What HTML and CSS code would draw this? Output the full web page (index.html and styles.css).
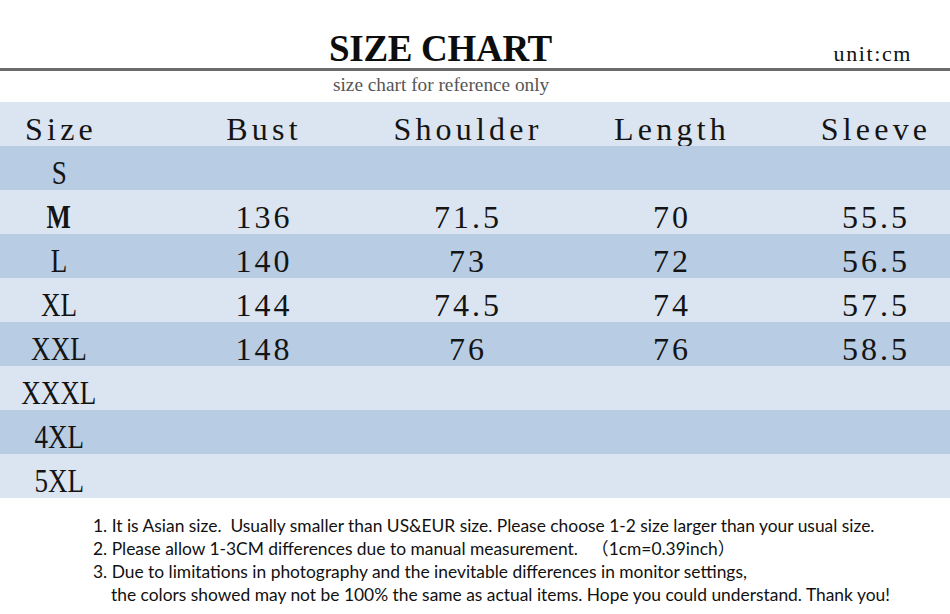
FILE: index.html
```html
<!DOCTYPE html>
<html>
<head>
<meta charset="utf-8">
<link rel="stylesheet" href="styles.css">
</head>
<body>
<header class="top">
  <div class="title-row">
    <h1 class="title">SIZE CHART</h1>
    <span class="unit">unit:cm</span>
  </div>
  <div class="rule"></div>
  <p class="sub">size chart for reference only</p>
</header>

<section class="chart">
  <div class="row light head">
    <div class="cell first">Size</div>
    <div class="cell">Bust</div>
    <div class="cell">Shoulder</div>
    <div class="cell">Length</div>
    <div class="cell last">Sleeve</div>
  </div>
  <div class="row dark">
    <div class="cell first"><span class="lbl">S</span></div>
    <div class="cell"></div><div class="cell"></div><div class="cell"></div><div class="cell last"></div>
  </div>
  <div class="row light">
    <div class="cell first"><span class="lbl bold">M</span></div>
    <div class="cell">136</div><div class="cell">71.5</div><div class="cell">70</div><div class="cell last">55.5</div>
  </div>
  <div class="row dark">
    <div class="cell first"><span class="lbl">L</span></div>
    <div class="cell">140</div><div class="cell">73</div><div class="cell">72</div><div class="cell last">56.5</div>
  </div>
  <div class="row light">
    <div class="cell first"><span class="lbl">XL</span></div>
    <div class="cell">144</div><div class="cell">74.5</div><div class="cell">74</div><div class="cell last">57.5</div>
  </div>
  <div class="row dark">
    <div class="cell first"><span class="lbl">XXL</span></div>
    <div class="cell">148</div><div class="cell">76</div><div class="cell">76</div><div class="cell last">58.5</div>
  </div>
  <div class="row light">
    <div class="cell first"><span class="lbl">XXXL</span></div>
    <div class="cell"></div><div class="cell"></div><div class="cell"></div><div class="cell last"></div>
  </div>
  <div class="row dark">
    <div class="cell first"><span class="lbl">4XL</span></div>
    <div class="cell"></div><div class="cell"></div><div class="cell"></div><div class="cell last"></div>
  </div>
  <div class="row light">
    <div class="cell first"><span class="lbl">5XL</span></div>
    <div class="cell"></div><div class="cell"></div><div class="cell"></div><div class="cell last"></div>
  </div>
</section>

<section class="notes">
  <p class="note">1. It is Asian size.  Usually smaller than US&amp;EUR size. Please choose 1-2 size larger than your usual size.</p>
  <p class="note">2. Please allow 1-3CM differences due to manual measurement.   （1cm=0.39inch）</p>
  <p class="note">3. Due to limitations in photography and the inevitable differences in monitor settings,</p>
  <p class="note indent">the colors showed may not be 100% the same as actual items. Hope you could understand. Thank you!</p>
</section>
</body>
</html>
```

FILE: styles.css
```css
* { box-sizing: border-box; }

html, body {
  margin: 0;
  padding: 0;
  background: #ffffff;
}

body {
  width: 950px;
  height: 614px;
  overflow: hidden;
  font-family: "Liberation Serif", "Times New Roman", serif;
  color: #111111;
}

.top {
  display: flex;
  flex-direction: column;
}

.title-row {
  height: 68px;
  padding-top: 30px;
  display: flex;
  align-items: baseline;
}

.title {
  margin: 0 0 0 329px;
  font-family: "Liberation Serif", serif;
  font-size: 37px;
  line-height: 37px;
  font-weight: bold;
  color: #0d0d0d;
  letter-spacing: -0.3px;
}

.unit {
  margin-left: auto;
  margin-right: 38px;
  font-family: "Liberation Serif", serif;
  font-size: 22px;
  letter-spacing: 1.6px;
  color: #111111;
}

.rule {
  height: 3px;
  background: #6b6b6b;
}

.sub {
  margin: 0;
  height: 31px;
  padding-left: 333px;
  padding-bottom: 4px;
  font-family: "Liberation Serif", serif;
  font-size: 19.3px;
  line-height: 27px;
  color: #555555;
}

.chart {
  display: flex;
  flex-direction: column;
}

.row {
  height: 44px;
  display: grid;
  grid-template-columns: 160px 204px 204px 204px 178px;
}

.light { background: #dbe5f1; }
.dark { background: #b8cce4; }

.cell {
  padding-top: 10px;
  padding-left: 4px;
  font-family: "Liberation Serif", "Times New Roman", serif;
  font-size: 32px;
  line-height: 34px;
  letter-spacing: 3px;
  text-align: center;
  white-space: nowrap;
  color: #141414;
}

.head .cell {
  letter-spacing: 4.2px;
}

.cell.first {
  padding-right: 42px;
  padding-left: 0;
}

.cell.last {
  padding-left: 30px;
}

.head .cell.first {
  padding-left: 4px;
}

.lbl {
  display: inline-block;
  font-family: "Liberation Serif", "Times New Roman", serif;
  font-size: 33px;
  letter-spacing: 0;
  transform: scaleX(0.82);
}

.lbl.bold {
  font-weight: bold;
  transform: scaleX(0.78);
}

.notes {
  padding-top: 16px;
  padding-left: 93px;
  font-family: "Lato", "Noto Sans CJK SC", sans-serif;
  font-size: 17.4px;
  line-height: 23px;
  color: #111111;
}

.note {
  margin: 0;
  white-space: pre;
}

.note.indent {
  padding-left: 18px;
}
```
